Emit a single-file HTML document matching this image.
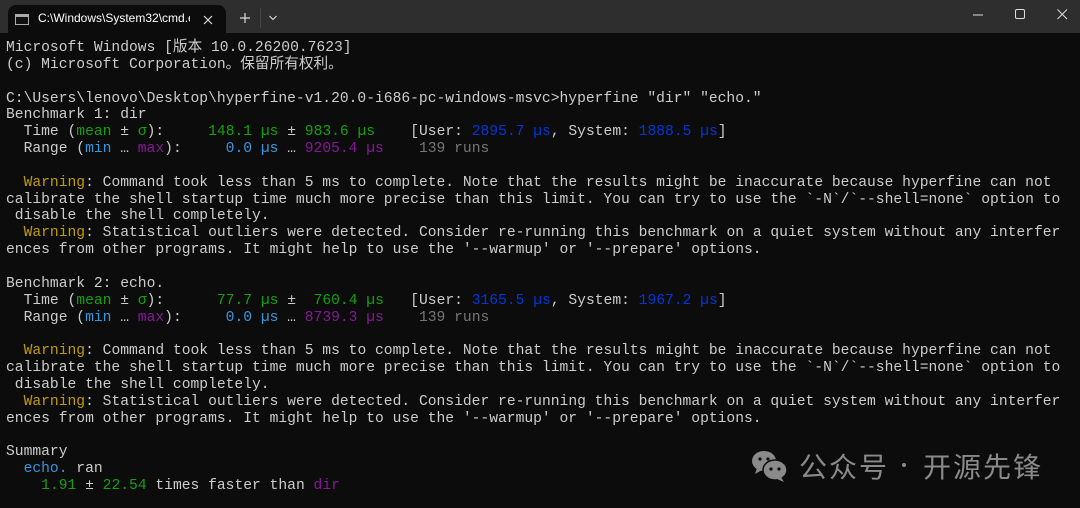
<!DOCTYPE html>
<html><head><meta charset="utf-8"><style>
html,body{margin:0;padding:0;width:1080px;height:508px;background:#0c0c0c;overflow:hidden;}
.tb{position:absolute;left:0;top:0;width:1080px;height:33px;background:#2e2e2e;}
.tab{position:absolute;left:8px;top:5px;width:218px;height:28px;background:#0c0c0c;border-radius:8px 8px 0 0;}
.tt{position:absolute;left:38px;top:11px;width:152px;overflow:hidden;white-space:nowrap;font:12px "Liberation Sans",sans-serif;color:#fff;}
pre{position:absolute;left:6px;top:40px;margin:0;font-family:"Liberation Mono","Noto Sans CJK SC",monospace;font-size:14.65px;line-height:16.85px;color:#cccccc;}
.g{color:#13a10e}.b{color:#3a96dd}.p{color:#881798}.y{color:#c19c00}.d{color:#767676}.u{color:#0037da}
.wm{position:absolute;top:446px;font:28px "Noto Sans CJK SC",sans-serif;color:#8a8a8a;white-space:nowrap;letter-spacing:2px;}
</style></head><body>
<div class="tb"></div>
<div class="tab">
<svg style="position:absolute;left:7px;top:9px" width="14" height="11"><rect x="0.5" y="0.5" width="13" height="10" fill="#111" stroke="#aaa"/><rect x="1" y="1" width="12" height="2" fill="#aaa"/></svg>
<svg style="position:absolute;left:195px;top:10px" width="10" height="10"><path d="M1 1L9 9M9 1L1 9" stroke="#ddd" stroke-width="1.2"/></svg>
</div>
<div class="tt">C:\Windows\System32\cmd.exe</div>
<svg style="position:absolute;left:240px;top:13px" width="10" height="10"><path d="M5 0V10M0 5H10" stroke="#ddd" stroke-width="1.2"/></svg>
<div style="position:absolute;left:260px;top:8px;width:1px;height:20px;background:#444"></div>
<svg style="position:absolute;left:269px;top:15px" width="8" height="6"><path d="M0.5 1L4 4.5L7.5 1" stroke="#ddd" fill="none" stroke-width="1.1"/></svg>
<svg style="position:absolute;left:973px;top:14px" width="10" height="2"><path d="M0 1H10" stroke="#ddd"/></svg>
<svg style="position:absolute;left:1015px;top:9px" width="11" height="11"><rect x="0.5" y="0.5" width="9" height="9" rx="1.5" fill="none" stroke="#ddd"/></svg>
<svg style="position:absolute;left:1057px;top:9px" width="11" height="11"><path d="M0.5 0.5L10 10M10 0.5L0.5 10" stroke="#ddd"/></svg>
<pre>Microsoft Windows [版本 10.0.26200.7623]
(c) Microsoft Corporation。保留所有权利。

C:\Users\lenovo\Desktop\hyperfine-v1.20.0-i686-pc-windows-msvc>hyperfine "dir" "echo."
Benchmark 1: dir
  Time (<span class="g">mean</span> ± <span class="g">σ</span>):     <span class="g">148.1 µs</span> ± <span class="g">983.6 µs</span>    [User: <span class="u">2895.7 µs</span>, System: <span class="u">1888.5 µs</span>]
  Range (<span class="b">min</span> … <span class="p">max</span>):     <span class="b">0.0 µs</span> … <span class="p">9205.4 µs</span>    <span class="d">139 runs</span>

  <span class="y">Warning</span>: Command took less than 5 ms to complete. Note that the results might be inaccurate because hyperfine can not
calibrate the shell startup time much more precise than this limit. You can try to use the `-N`/`--shell=none` option to
 disable the shell completely.
  <span class="y">Warning</span>: Statistical outliers were detected. Consider re-running this benchmark on a quiet system without any interfer
ences from other programs. It might help to use the '--warmup' or '--prepare' options.

Benchmark 2: echo.
  Time (<span class="g">mean</span> ± <span class="g">σ</span>):      <span class="g">77.7 µs</span> ±  <span class="g">760.4 µs</span>   [User: <span class="u">3165.5 µs</span>, System: <span class="u">1967.2 µs</span>]
  Range (<span class="b">min</span> … <span class="p">max</span>):     <span class="b">0.0 µs</span> … <span class="p">8739.3 µs</span>    <span class="d">139 runs</span>

  <span class="y">Warning</span>: Command took less than 5 ms to complete. Note that the results might be inaccurate because hyperfine can not
calibrate the shell startup time much more precise than this limit. You can try to use the `-N`/`--shell=none` option to
 disable the shell completely.
  <span class="y">Warning</span>: Statistical outliers were detected. Consider re-running this benchmark on a quiet system without any interfer
ences from other programs. It might help to use the '--warmup' or '--prepare' options.

Summary
  <span class="b">echo.</span> ran
    <span class="g">1.91</span> ± <span class="g">22.54</span> times faster than <span class="p">dir</span></pre>
<svg style="position:absolute;left:749px;top:449px" width="42" height="34">
<ellipse cx="15" cy="12" rx="12" ry="10" fill="#8a8a8a"/><path d="M8 19L6 25L13 21Z" fill="#8a8a8a"/>
<ellipse cx="26" cy="21" rx="12" ry="10" fill="#8a8a8a" stroke="#0c0c0c" stroke-width="1.5"/><path d="M32 28L35 33L28 30Z" fill="#8a8a8a"/>
<circle cx="11" cy="10" r="1.6" fill="#0c0c0c"/><circle cx="19" cy="10" r="1.6" fill="#0c0c0c"/>
<circle cx="22" cy="20" r="1.6" fill="#0c0c0c"/><circle cx="30" cy="20" r="1.6" fill="#0c0c0c"/>
</svg>
<div class="wm" style="left:799px">公众号</div>
<div style="position:absolute;left:902px;top:463px;width:4px;height:4px;border-radius:2px;background:#8a8a8a"></div>
<div class="wm" style="left:923px">开源先锋</div>
</body></html>
